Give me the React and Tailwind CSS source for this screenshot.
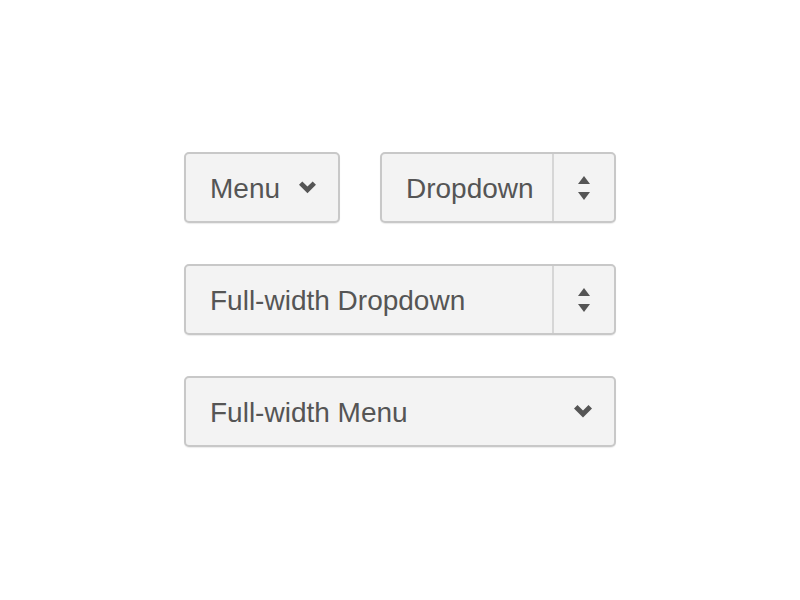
import React from 'react'

function Chevron() {
  return (
    <svg width="18" height="13" viewBox="0 0 18 13" className="block">
      <path d="M0 3.5 L3.5 0 L9 5.5 L14.5 0 L18 3.5 L9 12.5 Z" fill="#555555" />
    </svg>
  )
}

function Arrows() {
  return (
    <svg width="12" height="24" viewBox="0 0 12 24" className="block">
      <path d="M6 0 L12 8 L0 8 Z" fill="#555555" />
      <path d="M0 16 L12 16 L6 24 Z" fill="#555555" />
    </svg>
  )
}

function MenuButton({ label, full }) {
  return (
    <button
      className={`flex items-center h-[71px] bg-[#f3f3f3] border-2 border-[#c8c8c8] rounded-[5px] shadow-[0_1px_1px_rgba(0,0,0,0.08)] text-[#555555] text-[28px] pl-6 ${
        full ? 'w-full justify-between pr-[22px]' : 'w-[156px] pr-[22px] gap-[19px]'
      }`}
    >
      <span className="leading-none pt-[2px]">{label}</span>
      <Chevron />
    </button>
  )
}

function DropdownButton({ label, full }) {
  return (
    <div
      className={`flex items-stretch h-[71px] bg-[#f3f3f3] border-2 border-[#c8c8c8] rounded-[5px] shadow-[0_1px_1px_rgba(0,0,0,0.08)] text-[#555555] text-[28px] ${
        full ? 'w-full' : 'w-[236px]'
      }`}
    >
      <div className="flex-1 flex items-center pl-6">
        <span className="leading-none pt-[2px]">{label}</span>
      </div>
      <div className="w-[62px] border-l-2 border-[#d6d6d6] flex items-center justify-center">
        <Arrows />
      </div>
    </div>
  )
}

export default function App() {
  return (
    <div
      className="w-[800px] h-[600px] bg-white pt-[152px] pl-[184px]"
      style={{ fontFamily: '"Liberation Sans", Arial, sans-serif' }}
    >
      <div className="w-[432px] flex flex-col gap-[41px]">
        <div className="flex justify-between">
          <MenuButton label="Menu" />
          <DropdownButton label="Dropdown" />
        </div>
        <DropdownButton label="Full-width Dropdown" full />
        <MenuButton label="Full-width Menu" full />
      </div>
    </div>
  )
}
